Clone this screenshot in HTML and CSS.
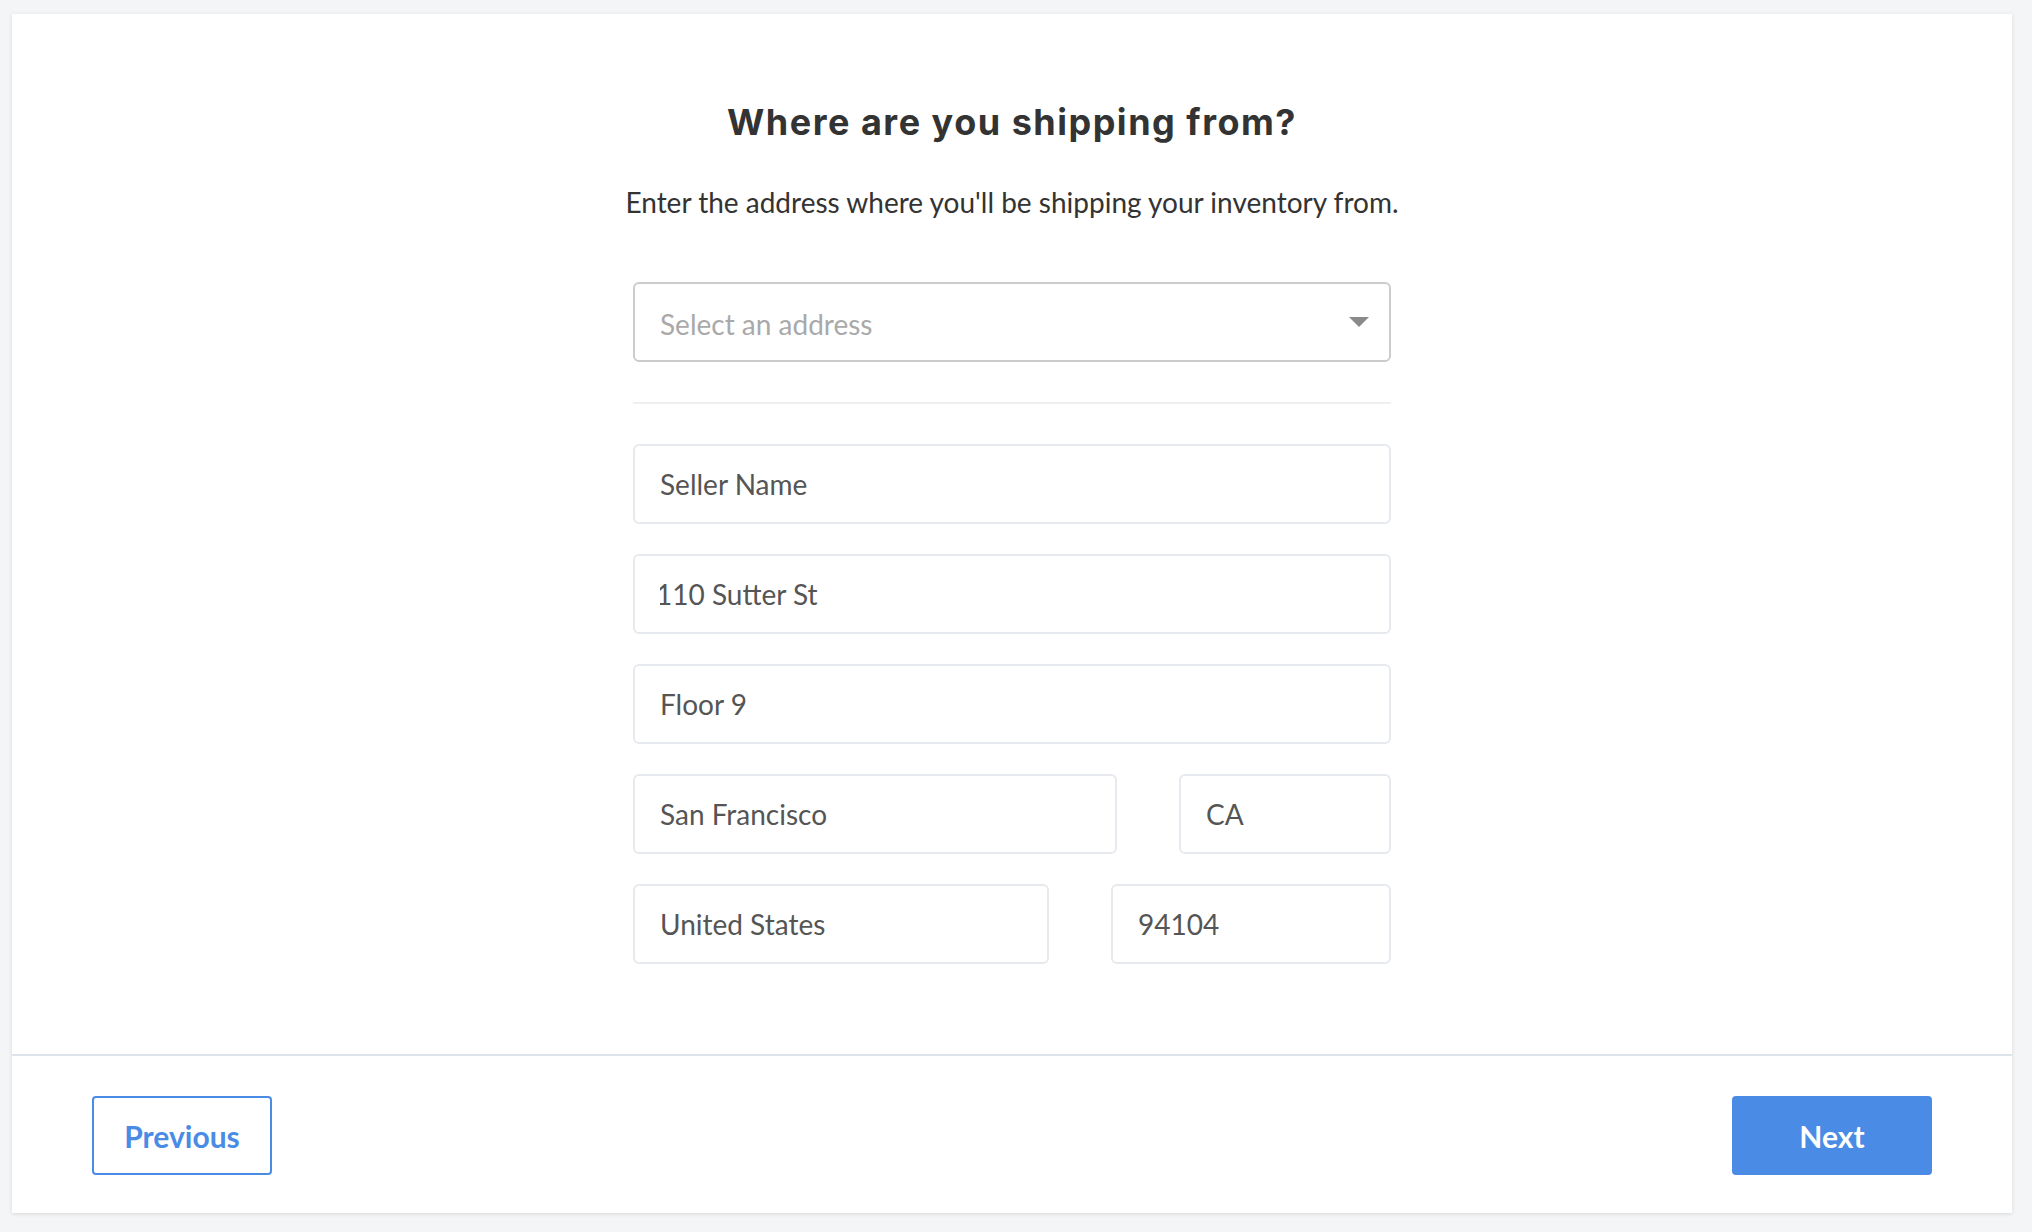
FILE: index.html
```html
<!DOCTYPE html>
<html lang="en">
<head>
<meta charset="utf-8">
<title>Where are you shipping from?</title>
<link rel="stylesheet" href="styles.css">
</head>
<body>
<div class="page">
  <div class="card">
    <main class="card-body">
      <h1 class="title">Where are you shipping from?</h1>
      <p class="subtitle">Enter the address where you'll be shipping your inventory from.</p>
      <form class="form">
        <div class="select" role="combobox" aria-expanded="false">
          <span class="select-placeholder">Select an address</span>
          <svg class="select-arrow" width="20" height="10" viewBox="0 0 20 10" aria-hidden="true"><path d="M0 0 H20 L10 10 Z" fill="#8a8a8a"/></svg>
        </div>
        <hr class="divider">
        <div class="fields">
          <input class="field" type="text" placeholder="Seller Name">
          <input class="field field-num" type="text" value="110 Sutter St">
          <input class="field" type="text" value="Floor 9">
          <div class="row">
            <input class="field field-city" type="text" value="San Francisco">
            <input class="field field-state" type="text" value="CA">
          </div>
          <div class="row">
            <input class="field field-country" type="text" value="United States">
            <input class="field field-zip" type="text" value="94104">
          </div>
        </div>
      </form>
    </main>
    <footer class="card-footer">
      <button class="btn btn-outline" type="button">Previous</button>
      <button class="btn btn-primary" type="button">Next</button>
    </footer>
  </div>
</div>
</body>
</html>
```
FILE: styles.css
```css
* { box-sizing: border-box; }

html, body {
  margin: 0;
  padding: 0;
  background: #f4f5f7;
}

.page {
  height: 1232px;
  padding: 14px 20px 19px 12px;
  display: flex;
}

.card {
  flex: 1;
  display: flex;
  flex-direction: column;
  background: #ffffff;
  box-shadow: 0 1px 4px rgba(0, 0, 0, 0.12);
}

.card-body {
  flex: 1;
  display: flex;
  flex-direction: column;
  align-items: center;
  padding-top: 87px;
}

.title {
  margin: 0;
  font-family: Inter, "Noto Sans", sans-serif;
  font-weight: 700;
  font-size: 36px;
  line-height: 42px;
  letter-spacing: 1.5px;
  color: #333333;
  text-align: center;
}

.subtitle {
  margin: 42px 0 0;
  font-family: Lato, "Noto Sans", sans-serif;
  font-size: 28px;
  line-height: 34px;
  color: #333333;
  text-align: center;
}

.form {
  width: 758px;
  margin-top: 63px;
}

.select {
  height: 80px;
  border: 2px solid #cccccc;
  border-radius: 6px;
  display: flex;
  align-items: center;
  justify-content: space-between;
  padding: 4px 20px 0 25px;
}

.select-placeholder {
  font-family: Lato, "Noto Sans", sans-serif;
  font-size: 28px;
  line-height: 34px;
  color: #a9a9a9;
}

.select-arrow {
  display: block;
  margin-top: -4px;
}

.divider {
  border: 0;
  height: 2px;
  background: #efefef;
  margin: 40px 0;
}

.fields {
  display: flex;
  flex-direction: column;
  gap: 30px;
}

.row {
  display: flex;
  justify-content: space-between;
}

.field {
  display: block;
  width: 100%;
  height: 80px;
  margin: 0;
  border: 2px solid #e6e9ed;
  border-radius: 6px;
  padding: 0 20px 0 25px;
  font-family: Lato, "Noto Sans", sans-serif;
  font-size: 28px;
  line-height: 34px;
  color: #555555;
  background: #ffffff;
  outline: none;
}

.field::placeholder {
  color: #555555;
  opacity: 1;
}

.field-num { text-indent: -4px; }

.field-city { width: 484px; }
.field-state { width: 212px; }
.field-country { width: 416px; }
.field-zip { width: 280px; }

.card-footer {
  border-top: 2px solid #dde3ea;
  padding: 40px 80px 38px;
  display: flex;
  justify-content: space-between;
  align-items: center;
}

.btn {
  height: 79px;
  border-radius: 4px;
  font-family: Lato, "Noto Sans", sans-serif;
  font-weight: 700;
  font-size: 30px;
  line-height: 36px;
  cursor: pointer;
  padding: 0;
}

.btn-outline {
  width: 180px;
  background: #ffffff;
  border: 2px solid #4a8be5;
  color: #4a8be5;
}

.btn-primary {
  width: 200px;
  background: #4a8be5;
  border: 0;
  color: #ffffff;
}
```
